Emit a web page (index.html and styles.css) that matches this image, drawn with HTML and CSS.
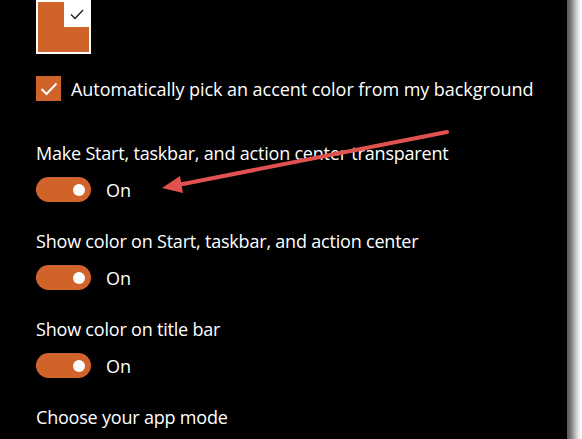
FILE: index.html
```html
<!DOCTYPE html>
<html lang="en">
<head>
  <meta charset="UTF-8" />
  <title>Colors</title>
  <link rel="stylesheet" href="styles.css">
</head>
<body>
  <div class="window">
    <div class="panel">
      <div class="swatch">
        <div class="swatch-fill">
          <div class="swatch-picked">
            <svg width="14" height="11" viewBox="0 0 14 11"><path d="M1 5.5 L5 9.5 L13 1" fill="none" stroke="#222" stroke-width="1.4"/></svg>
          </div>
        </div>
      </div>

      <label class="check">
        <span class="check-box">
          <svg width="18" height="14" viewBox="0 0 18 14"><path d="M1.5 7 L6.5 12 L16.5 1.5" fill="none" stroke="#fff" stroke-width="2"/></svg>
        </span>
        Automatically pick an accent color from my background
      </label>

      <div class="settings">
        <div class="setting">
          <div class="label">Make Start, taskbar, and action center transparent</div>
          <div class="toggle-row"><span class="toggle"><span class="knob"></span></span>On</div>
        </div>

        <div class="setting">
          <div class="label">Show color on Start, taskbar, and action center</div>
          <div class="toggle-row"><span class="toggle"><span class="knob"></span></span>On</div>
        </div>

        <div class="setting">
          <div class="label">Show color on title bar</div>
          <div class="toggle-row"><span class="toggle"><span class="knob"></span></span>On</div>
        </div>

        <div class="setting">
          <div class="label">Choose your app mode</div>
        </div>
      </div>
    </div>
    <div class="edge"></div>
  </div>

  <!-- annotation arrow drawn over the screenshot -->
  <svg class="arrow" width="582" height="439" viewBox="0 0 582 439">
    <line x1="447" y1="132" x2="178" y2="185" stroke="#e05250" stroke-width="4" stroke-linecap="round"/>
    <polygon points="162,188 183,193 180,176" fill="#e05250"/>
  </svg>
</body>
</html>
```

FILE: styles.css
```css
body {
  margin: 0;
  background: #000;
  color: #fff;
  font-family: 'Open Sans', sans-serif;
  font-size: 18px;
  overflow: hidden;
  position: relative;
}

.window {
  display: flex;
  height: 439px;
}

.panel {
  flex: 1;
  padding-left: 36px;
}

.edge {
  width: 15px;
  background: linear-gradient(to right, #5a5a5a 0, #6e6e6e 3px, #9a9a9a 6px, #c8c8c8 9px, #eeeeee 12px, #ffffff 15px);
}

.swatch {
  width: 51px;
  height: 50px;
  padding: 2px;
  background: #fff;
}

.swatch-fill {
  width: 51px;
  height: 50px;
  background: #d0632a;
  position: relative;
}

.swatch-picked {
  position: absolute;
  top: 0;
  right: 0;
  width: 25px;
  height: 25px;
  background: #fff;
  display: flex;
  align-items: center;
  justify-content: center;
}

.check {
  display: flex;
  align-items: center;
  gap: 10px;
  margin-top: 22px;
  height: 25px;
  letter-spacing: -0.05px;
}

.check-box {
  width: 25px;
  height: 25px;
  background: #d0632a;
  display: flex;
  align-items: center;
  justify-content: center;
}

.settings {
  margin-top: 40px;
}

.setting {
  margin-bottom: 27px;
}

.label {
  height: 24px;
  line-height: 24px;
  margin-bottom: 12px;
  letter-spacing: -0.2px;
}

.toggle-row {
  display: flex;
  align-items: center;
  gap: 15px;
  height: 25px;
}

.toggle {
  width: 55px;
  height: 25px;
  border-radius: 13px;
  background: #d0632a;
  display: flex;
  align-items: center;
  justify-content: flex-end;
  padding-right: 6px;
  box-sizing: border-box;
}

.knob {
  width: 12px;
  height: 12px;
  border-radius: 50%;
  background: #fff;
}

.arrow {
  position: absolute;
  top: 0;
  left: 0;
  pointer-events: none;
}
```
